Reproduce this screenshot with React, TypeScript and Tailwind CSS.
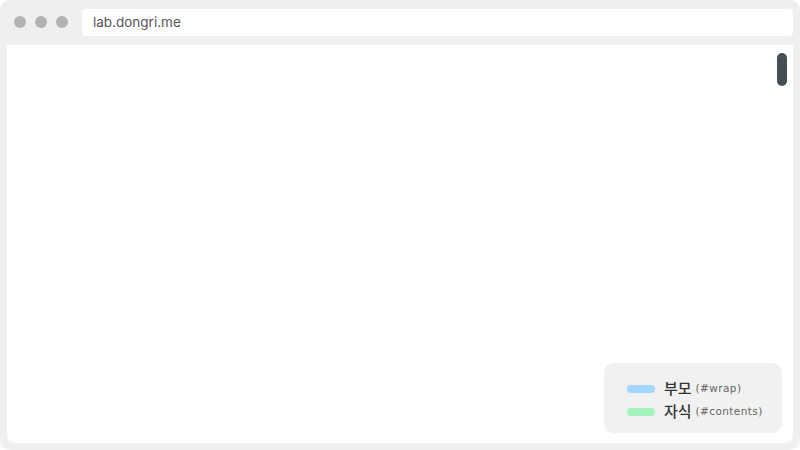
import React from "react";

export default function App() {
  return (
    <div className="w-[800px] h-[450px] bg-white">
      <div className="w-full h-full bg-[#efefef] rounded-[10px] flex flex-col px-[7px] pb-[7px]">
        <div className="h-[45px] flex items-center shrink-0">
          <div className="flex items-center gap-[9px] pl-[7px] pr-[14px] mt-[-1px]">
            <div className="w-[12px] h-[12px] rounded-full bg-[#b3b3b3]" />
            <div className="w-[12px] h-[12px] rounded-full bg-[#b3b3b3]" />
            <div className="w-[12px] h-[12px] rounded-full bg-[#b3b3b3]" />
          </div>
          <div className="flex-1 h-[27px] mt-[-1px] bg-white rounded-[4px] flex items-center pl-[11px] text-[13.5px] text-[#555555]" style={{ fontFamily: "Inter, 'Noto Sans', sans-serif" }}>
            lab.dongri.me
          </div>
        </div>
        <div className="flex-1 bg-white rounded-b-[8px] flex flex-col items-end pt-[8px] pr-[6px] pb-[10px]">
          <div className="w-[10px] h-[33px] rounded-full bg-[#434e56]" />
          <div className="flex-1" />
          <div className="w-[178px] h-[70px] bg-[#f1f1f1] rounded-[10px] mr-[5px] flex flex-col justify-center gap-[3px] pl-[23px] pt-[4px]" style={{ fontFamily: "'Noto Sans CJK KR', 'DejaVu Sans', sans-serif" }}>
            <div className="flex items-center h-[20px]">
              <div className="w-[28px] h-[8px] rounded-full bg-[#a2d5ff]" />
              <span className="ml-[9px] text-[15px] font-medium text-[#333333]">부모</span>
              <span className="ml-[4px] text-[10.5px] text-[#666666] tracking-[0.4px]" style={{ fontFamily: "'DejaVu Sans', sans-serif" }}>(#wrap)</span>
            </div>
            <div className="flex items-center h-[20px]">
              <div className="w-[28px] h-[8px] rounded-full bg-[#a3f5bd]" />
              <span className="ml-[9px] text-[15px] font-medium text-[#333333]">자식</span>
              <span className="ml-[4px] text-[10.5px] text-[#666666] tracking-[0.4px]" style={{ fontFamily: "'DejaVu Sans', sans-serif" }}>(#contents)</span>
            </div>
          </div>
        </div>
      </div>
    </div>
  );
}
